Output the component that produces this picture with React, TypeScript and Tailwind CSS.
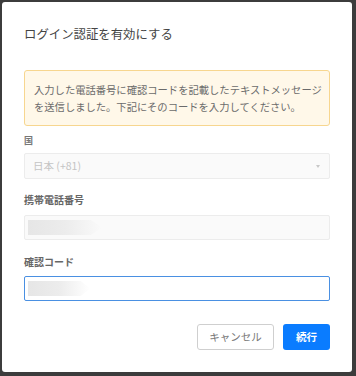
import React from "react";

const Blur: React.FC<{ w: string }> = ({ w }) => (
  <div
    className={`h-[15px] ${w} bg-gradient-to-r from-[#e6e6e6] via-[#ececec] to-transparent [clip-path:polygon(0_0,85%_0,100%_50%,85%_100%,0_100%)]`}
  />
);

const App: React.FC = () => {
  return (
    <div className="w-[356px] h-[376px] bg-[#3c3c3c] pt-[2px] pl-[2px] font-['Noto_Sans_CJK_JP','Noto_Sans',sans-serif]">
      <div className="w-[350px] h-[370px] bg-white rounded-[3px] flex flex-col px-[22px]">
        {/* title */}
        <h1 className="mt-[23px] text-[12.4px] leading-[18px] text-[#444]">ログイン認証を有効にする</h1>

        {/* notice */}
        <div className="mt-[27px] border border-[#f7d68f] bg-[#fff8e9] rounded-[3px] pl-[9px] pr-[6px] py-[10px] text-[10.3px] leading-[17px] text-[#6b6b6b]">
          入力した電話番号に確認コードを記載したテキストメッセージを送信しました。下記にそのコードを入力してください。
        </div>

        {/* country */}
        <label className="mt-[8px] text-[9px] leading-[14px] font-bold text-[#777]">国</label>
        <div className="mt-[5px] h-[26px] border border-[#ececec] bg-[#fafafa] rounded-[2px] flex items-center justify-between px-[8px]">
          <span className="text-[10.5px] text-[#c4c4c4]">日本 (+81)</span>
          <span className="w-0 h-0 border-l-[2.5px] border-r-[2.5px] border-t-[3px] border-l-transparent border-r-transparent border-t-[#c8c8c8] mr-[1px]" />
        </div>

        {/* phone */}
        <label className="mt-[14px] text-[10px] leading-[14px] font-bold text-[#666]">携帯電話番号</label>
        <div className="mt-[8px] h-[25px] border border-[#ececec] bg-[#fafafa] rounded-[2px] flex items-center px-[3px]">
          <Blur w="w-[74px]" />
        </div>

        {/* code */}
        <label className="mt-[15px] text-[10px] leading-[14px] font-bold text-[#666]">確認コード</label>
        <div className="mt-[7px] h-[25px] border border-[#4a90e2] bg-white rounded-[2px] flex items-center px-[3px]">
          <Blur w="w-[62px]" />
        </div>

        {/* actions */}
        <div className="mt-[23px] flex justify-end gap-[9px]">
          <button className="h-[26px] w-[77px] border border-[#cfcfcf] rounded-[3px] bg-white text-[10.5px] text-[#777]">
            キャンセル
          </button>
          <button className="h-[26px] w-[47px] rounded-[3px] bg-[#0a7cff] text-[10.5px] font-bold text-white">
            続行
          </button>
        </div>
      </div>
    </div>
  );
};

export default App;
